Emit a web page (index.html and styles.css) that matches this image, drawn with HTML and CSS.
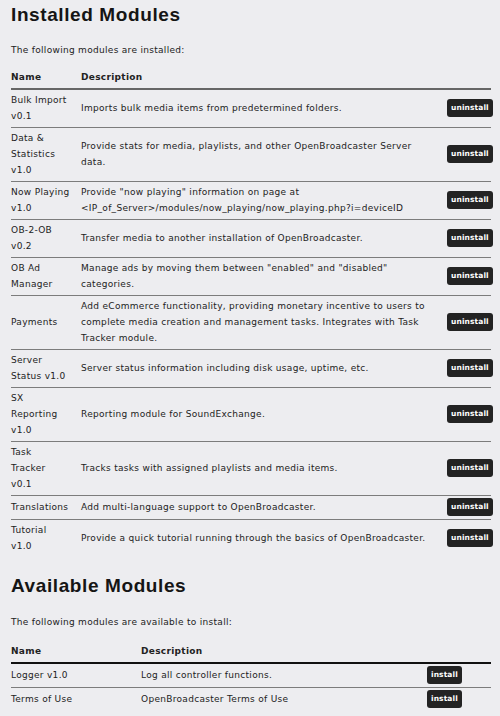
FILE: index.html
```html
<!DOCTYPE html>
<html>
<head>
<meta charset="utf-8">
<link rel="stylesheet" href="styles.css">
</head>
<body>
<h1 class="title">Installed Modules</h1>
<p class="intro">The following modules are installed:</p>
<table class="modules installed">
  <thead>
    <tr><th class="c-name">Name</th><th class="c-desc">Description</th><th class="c-btn"></th></tr>
  </thead>
  <tbody>
    <tr><td class="c-name">Bulk Import v0.1</td><td class="c-desc">Imports bulk media items from predetermined folders.</td><td class="c-btn"><button class="btn">uninstall</button></td></tr>
    <tr><td class="c-name">Data &amp; Statistics v1.0</td><td class="c-desc">Provide stats for media, playlists, and other OpenBroadcaster Server data.</td><td class="c-btn"><button class="btn">uninstall</button></td></tr>
    <tr><td class="c-name">Now Playing v1.0</td><td class="c-desc">Provide "now playing" information on page at &lt;IP_of_Server&gt;/modules/now_playing/now_playing.php?i=deviceID</td><td class="c-btn"><button class="btn">uninstall</button></td></tr>
    <tr><td class="c-name">OB-2-OB v0.2</td><td class="c-desc">Transfer media to another installation of OpenBroadcaster.</td><td class="c-btn"><button class="btn">uninstall</button></td></tr>
    <tr><td class="c-name">OB Ad Manager</td><td class="c-desc">Manage ads by moving them between "enabled" and "disabled" categories.</td><td class="c-btn"><button class="btn">uninstall</button></td></tr>
    <tr><td class="c-name">Payments</td><td class="c-desc">Add eCommerce functionality, providing monetary incentive to users to complete media creation and management tasks. Integrates with Task Tracker module.</td><td class="c-btn"><button class="btn">uninstall</button></td></tr>
    <tr><td class="c-name">Server Status v1.0</td><td class="c-desc">Server status information including disk usage, uptime, etc.</td><td class="c-btn"><button class="btn">uninstall</button></td></tr>
    <tr><td class="c-name">SX Reporting v1.0</td><td class="c-desc">Reporting module for SoundExchange.</td><td class="c-btn"><button class="btn">uninstall</button></td></tr>
    <tr><td class="c-name">Task<br>Tracker<br>v0.1</td><td class="c-desc">Tracks tasks with assigned playlists and media items.</td><td class="c-btn"><button class="btn">uninstall</button></td></tr>
    <tr><td class="c-name">Translations</td><td class="c-desc">Add multi-language support to OpenBroadcaster.</td><td class="c-btn"><button class="btn">uninstall</button></td></tr>
    <tr><td class="c-name">Tutorial<br>v1.0</td><td class="c-desc">Provide a quick tutorial running through the basics of OpenBroadcaster.</td><td class="c-btn"><button class="btn">uninstall</button></td></tr>
  </tbody>
</table>

<h1 class="title second">Available Modules</h1>
<p class="intro second-intro">The following modules are available to install:</p>
<table class="modules available">
  <thead>
    <tr><th class="c-name">Name</th><th class="c-desc">Description</th><th class="c-btn"></th></tr>
  </thead>
  <tbody>
    <tr><td class="c-name">Logger v1.0</td><td class="c-desc">Log all controller functions.</td><td class="c-btn"><button class="btn">install</button></td></tr>
    <tr><td class="c-name">Terms of Use</td><td class="c-desc">OpenBroadcaster Terms of Use</td><td class="c-btn"><button class="btn">install</button></td></tr>
  </tbody>
</table>
</body>
</html>
```

FILE: styles.css
```css
html, body {
  margin: 0;
  padding: 0;
  background: #ededf0;
}
body {
  padding: 3px 9px 0 11px;
  font-family: "DejaVu Sans", sans-serif;
  font-size: 9px;
  line-height: 16px;
  letter-spacing: 0.3px;
  color: #222;
}
.title {
  margin: 0;
  font-family: "Liberation Sans", sans-serif;
  font-size: 19px;
  line-height: 24px;
  font-weight: bold;
  letter-spacing: 0.6px;
  color: #151515;
}
.title.second {
  margin-top: 17px;
}
.intro {
  margin: 15px 0 9px;
}
.intro.second-intro {
  margin: 16px 0 11px;
}
.modules {
  width: 480px;
  border-collapse: collapse;
  table-layout: fixed;
}
.modules th {
  text-align: left;
  font-weight: bold;
  padding: 2px 0 3px;
  border-bottom: 2px solid #666;
}
.modules.available th {
  border-bottom-color: #111;
}
.modules td {
  padding: 2px 0 3px;
  vertical-align: middle;
  border-bottom: 1px solid #7c7c7c;
}
.modules tbody tr:last-child td {
  border-bottom: none;
}
.installed .c-name { width: 59.5px; padding-right: 10.5px; }
.installed .c-desc { padding-right: 11px; }
.installed .c-btn { width: 44px; text-align: right; }
.available .c-name { width: 120px; padding-right: 10px; }
.available .c-desc { padding-right: 6px; }
.available .c-btn { width: 64px; text-align: left; }
.btn {
  display: inline-block;
  height: 18px;
  padding: 0 4px;
  border: none;
  border-radius: 3px;
  background: #232323;
  color: #fff;
  font-family: "DejaVu Sans", sans-serif;
  font-size: 7.5px;
  font-weight: bold;
  letter-spacing: 0.1px;
  line-height: 18px;
  vertical-align: middle;
}
```
